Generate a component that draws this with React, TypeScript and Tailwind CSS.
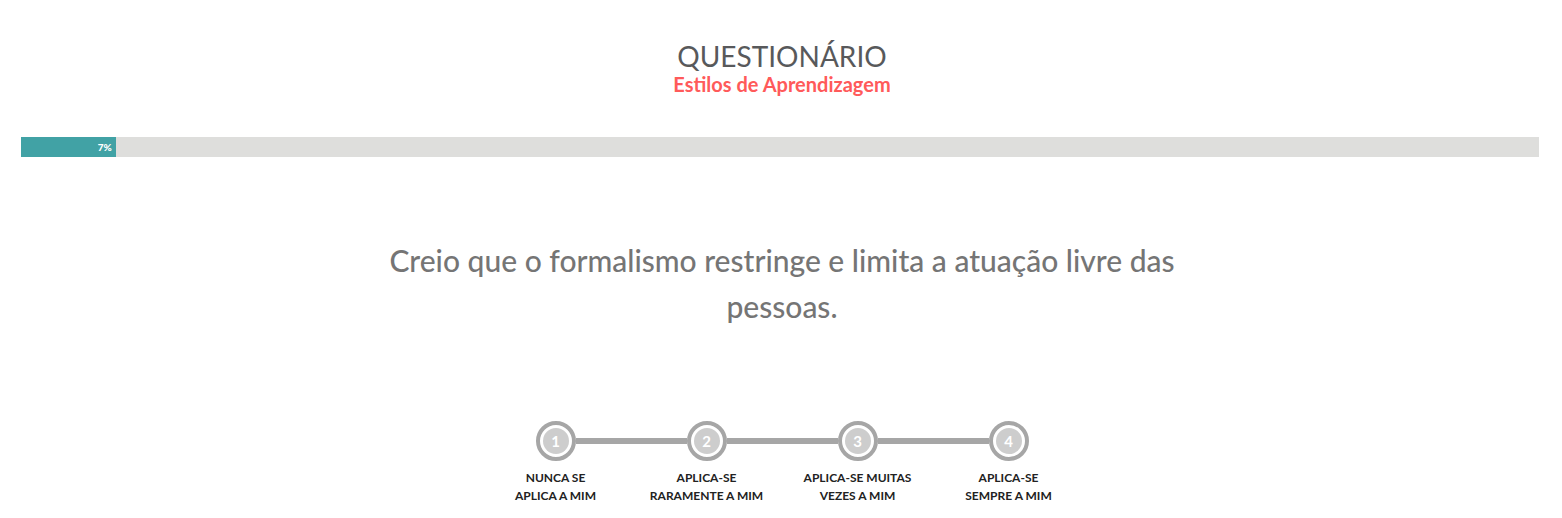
import { useState } from "react";

const progress = { label: "7%", fill: 6.25 };

const options = [
  { value: 1, lines: ["Nunca se", "aplica a mim"] },
  { value: 2, lines: ["Aplica-se", "raramente a mim"] },
  { value: 3, lines: ["Aplica-se muitas", "vezes a mim"] },
  { value: 4, lines: ["Aplica-se", "sempre a mim"] },
];

function ProgressBar({ label, fill }: { label: string; fill: number }) {
  return (
    <div
      role="progressbar"
      aria-label="Progresso"
      aria-valuenow={fill}
      aria-valuetext={label}
      aria-valuemin={0}
      aria-valuemax={100}
      className="mt-10 h-5 bg-[#dededc]"
    >
      <div
        className="flex h-full items-center justify-end bg-[#41a2a5] pr-1 text-[10px] leading-none font-black text-white"
        style={{ width: `${fill}%` }}
      >
        {label}
      </div>
    </div>
  );
}

export default function App() {
  const [answer, setAnswer] = useState<number | null>(null);

  return (
    <main className="bg-white pt-10 pr-[23px] pb-2 pl-[21px] font-['Lato',sans-serif]">
      <header className="pl-1 text-center">
        <h1 className="text-[28px] leading-8 text-[#58595b]">QUESTIONÁRIO</h1>
        <p className="text-[20px] leading-[25px] font-bold text-[#ff5a5a]">Estilos de Aprendizagem</p>
      </header>

      <ProgressBar label={progress.label} fill={progress.fill} />

      <fieldset className="mt-20 flex flex-col items-center pl-1">
        <legend className="mx-auto max-w-[840px] text-center text-[30px] leading-[46px] font-medium text-[#757575]">
          Creio que o formalismo restringe e limita a atuação livre das pessoas.
        </legend>
        <div className="mt-[92px] grid w-full max-w-[604px] grid-cols-4">
          {options.map((option, i) => (
            <label key={option.value} className="relative cursor-pointer text-center">
              <input
                type="radio"
                name="answer"
                value={option.value}
                checked={answer === option.value}
                onChange={() => setAnswer(option.value)}
                className="peer sr-only"
              />
              <span className="flex items-center peer-focus-visible:outline-2 peer-focus-visible:outline-[#41a2a5]">
                <span className={i === 0 ? "h-[6px] flex-1" : "h-[6px] flex-1 bg-[#a6a6a6]"} />
                <span className="flex size-10 items-center justify-center rounded-full border-4 border-[#a6a6a6] bg-white">
                  <span
                    className={
                      answer === option.value
                        ? "flex size-[26px] items-center justify-center rounded-full bg-[#41a2a5] text-[15px] leading-none font-bold text-white"
                        : "flex size-[26px] items-center justify-center rounded-full bg-[#cdcdcd] text-[15px] leading-none font-bold text-white"
                    }
                  >
                    {option.value}
                  </span>
                </span>
                <span
                  className={i === options.length - 1 ? "h-[6px] flex-1" : "h-[6px] flex-1 bg-[#a6a6a6]"}
                />
              </span>
              <span className="mt-2 block text-[12px] leading-[18px] font-bold text-[#222222] uppercase">
                {option.lines[0]}
                <br />
                {option.lines[1]}
              </span>
            </label>
          ))}
        </div>
      </fieldset>
    </main>
  );
}
